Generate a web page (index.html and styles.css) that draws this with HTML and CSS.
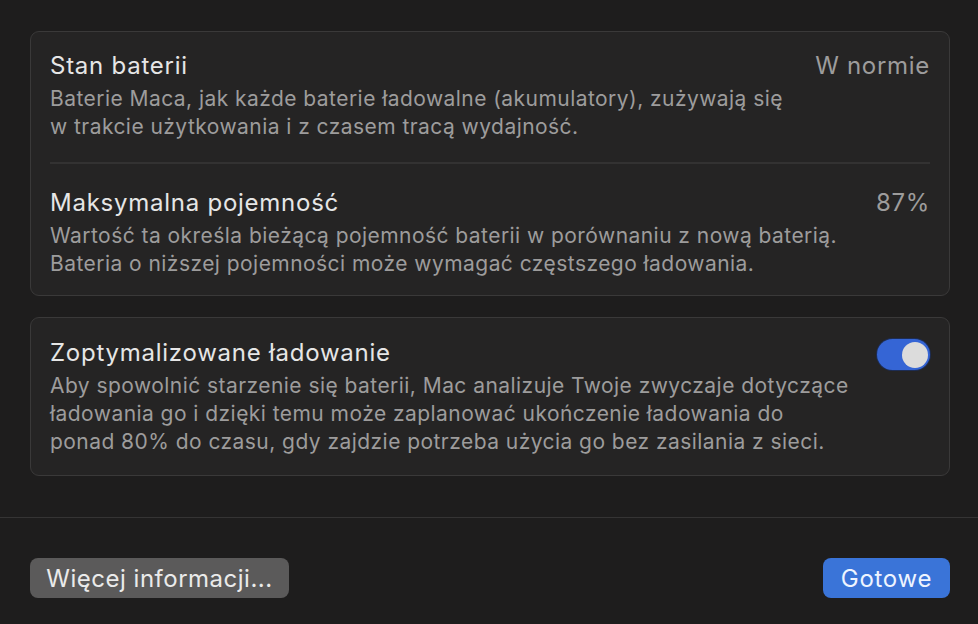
FILE: index.html
```html
<!DOCTYPE html>
<html lang="pl">
<head>
<meta charset="utf-8">
<link rel="stylesheet" href="styles.css">
</head>
<body>
<div class="sheet">
  <div class="content">
    <section class="card">
      <div class="row">
        <div class="text">
          <div class="title">Stan baterii</div>
          <div class="desc">Baterie Maca, jak każde baterie ładowalne (akumulatory), zużywają się<br>w trakcie użytkowania i z czasem tracą wydajność.</div>
        </div>
        <div class="value">W normie</div>
      </div>
      <div class="sep"></div>
      <div class="row">
        <div class="text">
          <div class="title">Maksymalna pojemność</div>
          <div class="desc">Wartość ta określa bieżącą pojemność baterii w porównaniu z nową baterią.<br>Bateria o niższej pojemności może wymagać częstszego ładowania.</div>
        </div>
        <div class="value">87%</div>
      </div>
    </section>
    <section class="card card-toggle">
      <div class="row">
        <div class="text">
          <div class="title">Zoptymalizowane ładowanie</div>
          <div class="desc">Aby spowolnić starzenie się baterii, Mac analizuje Twoje zwyczaje dotyczące<br>ładowania go i dzięki temu może zaplanować ukończenie ładowania do<br>ponad 80% do czasu, gdy zajdzie potrzeba użycia go bez zasilania z sieci.</div>
        </div>
        <div class="toggle"><div class="knob"></div></div>
      </div>
    </section>
  </div>
  <footer class="footer">
    <button class="btn btn-secondary">Więcej informacji...</button>
    <button class="btn btn-primary">Gotowe</button>
  </footer>
</div>
</body>
</html>
```
FILE: styles.css
```css
* { box-sizing: border-box; }
html, body {
  margin: 0;
  padding: 0;
  background: #1e1d1d;
  width: 978px;
  height: 624px;
  overflow: hidden;
  font-family: Inter, "Noto Sans", sans-serif;
}
.sheet {
  display: flex;
  flex-direction: column;
  height: 624px;
}
.content {
  padding: 31px 28px 41px 30px;
  display: flex;
  flex-direction: column;
  gap: 21px;
  border-bottom: 1px solid #353434;
}
.card {
  background: #252424;
  border: 1px solid #3a3939;
  border-radius: 9px;
  padding: 19px 19px 17px 19px;
}
.card-toggle {
  padding-top: 20px;
  padding-bottom: 19px;
}
.row {
  display: flex;
  justify-content: space-between;
  align-items: flex-start;
}
.title {
  color: #e6e6e6;
  font-size: 24px;
  line-height: 30px;
  letter-spacing: 0.75px;
}
.desc {
  color: #9d9c9c;
  font-size: 21px;
  line-height: 28px;
  letter-spacing: 0.45px;
  margin-top: 4px;
}
.value {
  color: #9d9c9c;
  font-size: 24px;
  line-height: 30px;
  letter-spacing: 0.7px;
}
.sep {
  height: 2px;
  background: #333232;
  margin: 21px 0 24px;
}
.toggle {
  width: 53px;
  height: 31px;
  border-radius: 16px;
  background: #3565d5;
  box-shadow: 0 0 0 1px #1d2d55;
  position: relative;
  margin-top: 1px;
}
.knob {
  position: absolute;
  right: 2px;
  top: 2.5px;
  width: 26px;
  height: 26px;
  border-radius: 50%;
  background: #dcdcdc;
}
.footer {
  display: flex;
  justify-content: space-between;
  padding: 40px 28px 0 30px;
}
.btn {
  font-family: Inter, "Noto Sans", sans-serif;
  font-size: 24px;
  letter-spacing: 0.5px;
  height: 40px;
  border: none;
  border-radius: 8px;
  padding: 0;
  color: #eaeaea;
}
.btn-secondary {
  background: #5b5a5a;
  width: 259px;
}
.btn-primary {
  background: #3a74d8;
  color: #eef4ff;
  width: 127px;
  letter-spacing: 0.7px;
}
```
